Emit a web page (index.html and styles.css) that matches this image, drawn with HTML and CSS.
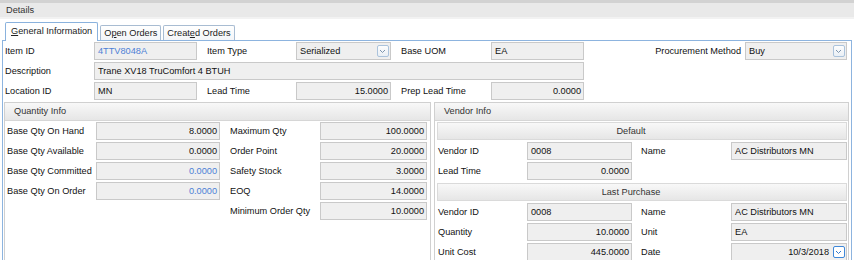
FILE: index.html
```html
<!DOCTYPE html>
<html lang="en">
<head>
    <meta charset="UTF-8">
    <meta name="viewport" content="width=device-width, initial-scale=1.0">
    <title>Item Details</title>
    <link rel="stylesheet" href="styles.css">
</head>
<body>
    <div class="details-bar">Details</div>

    <div class="tabs">
        <div class="tab active"><u>G</u>eneral Information</div>
        <div class="tab">O<u>p</u>en Orders</div>
        <div class="tab">Creat<u>e</u>d Orders</div>
    </div>

    <div class="tab-page">
        <!-- Item header fields -->
        <div class="item-grid">
            <div class="label">Item ID</div>
            <div class="field link">4TTV8048A</div>
            <div class="label gap">Item Type</div>
            <div class="field combo">Serialized<span class="drop"><svg viewBox="0 0 11 12" width="11" height="12"><path d="M3 5l2.5 2.5L8 5" fill="none" stroke="#7d95ae"/></svg></span></div>
            <div class="label gap">Base UOM</div>
            <div class="field">EA</div>
            <div class="label right">Procurement Method</div>
            <div class="field combo">Buy<span class="drop"><svg viewBox="0 0 11 12" width="11" height="12"><path d="M3 5l2.5 2.5L8 5" fill="none" stroke="#7d95ae"/></svg></span></div>

            <div class="label">Description</div>
            <div class="field wide">Trane XV18 TruComfort 4 BTUH</div>

            <div class="label new-row">Location ID</div>
            <div class="field">MN</div>
            <div class="label gap">Lead Time</div>
            <div class="field num">15.0000</div>
            <div class="label gap">Prep Lead Time</div>
            <div class="field num">0.0000</div>
        </div>

        <div class="panels">
            <section class="panel qty">
                <div class="panel-head">Quantity Info</div>
                <div class="qty-grid">
                    <div class="label">Base Qty On Hand</div>
                    <div class="field num">8.0000</div>
                    <div class="label gap">Maximum Qty</div>
                    <div class="field num">100.0000</div>

                    <div class="label">Base Qty Available</div>
                    <div class="field num">0.0000</div>
                    <div class="label gap">Order Point</div>
                    <div class="field num">20.0000</div>

                    <div class="label">Base Qty Committed</div>
                    <div class="field num link">0.0000</div>
                    <div class="label gap">Safety Stock</div>
                    <div class="field num">3.0000</div>

                    <div class="label">Base Qty On Order</div>
                    <div class="field num link">0.0000</div>
                    <div class="label gap">EOQ</div>
                    <div class="field num">14.0000</div>

                    <div class="label gap col-3">Minimum Order Qty</div>
                    <div class="field num">10.0000</div>
                </div>
            </section>

            <section class="panel vendor">
                <div class="panel-head">Vendor Info</div>

                <div class="sub-head">Default</div>
                <div class="vendor-grid">
                    <div class="label">Vendor ID</div>
                    <div class="field">0008</div>
                    <div class="label gap">Name</div>
                    <div class="field">AC Distributors MN</div>

                    <div class="label">Lead Time</div>
                    <div class="field num">0.0000</div>
                </div>

                <div class="sub-head">Last Purchase</div>
                <div class="vendor-grid">
                    <div class="label">Vendor ID</div>
                    <div class="field">0008</div>
                    <div class="label gap">Name</div>
                    <div class="field">AC Distributors MN</div>

                    <div class="label">Quantity</div>
                    <div class="field num">10.0000</div>
                    <div class="label gap">Unit</div>
                    <div class="field">EA</div>

                    <div class="label">Unit Cost</div>
                    <div class="field num">445.0000</div>
                    <div class="label gap">Date</div>
                    <div class="field combo date">10/3/2018<span class="drop focus"><svg viewBox="0 0 11 12" width="11" height="12"><path d="M3 5l2.5 2.5L8 5" fill="none" stroke="#2f78cf"/></svg></span></div>
                </div>
            </section>
        </div>
    </div>
</body>
</html>
```

FILE: styles.css
```css
/* General */
body {
    margin: 0;
    height: 260px;
    overflow: hidden;
    font-family: 'Liberation Sans', Arial, sans-serif;
    font-size: 9.2px;
    color: #111;
    background-color: #fff;
}

/* Details bar */
.details-bar {
    height: 14px;
    line-height: 14px;
    padding-left: 6px;
    border-top: 3px solid #d2d2d2;
    border-bottom: 2px solid #f2f2f2;
    background-color: #e9e9e9;
    color: #333;
}

/* Tabs */
.tabs {
    display: flex;
    align-items: flex-end;
    gap: 2px;
    height: 18px;
    margin-top: 3px;
    padding-left: 5px;
    position: relative;
    z-index: 1;
}

.tab {
    box-sizing: border-box;
    height: 15px;
    line-height: 14px;
    padding: 0 3px;
    border: 1px solid #a8bcd2;
    border-bottom: none;
    border-radius: 2px 2px 0 0;
    background: linear-gradient(#ffffff, #f3f5f8);
    color: #222;
}

.tab.active {
    height: 19px;
    line-height: 17px;
    margin-bottom: -1px;
    padding: 0 5px;
    border-color: #8ab2dd;
    background: #fff;
}

/* Tab page */
.tab-page {
    margin: 0 2px;
    height: 219px;
    border: 1px solid #8db4df;
    border-bottom: none;
}

/* Shared label / field look */
.label {
    line-height: 18px;
    padding-left: 2px;
    white-space: nowrap;
}

.label.gap {
    padding-left: 10px;
}

.label.right {
    text-align: right;
    padding-right: 4px;
}

.field {
    box-sizing: border-box;
    height: 18px;
    line-height: 16px;
    padding: 0 3px;
    border: 1px solid #c9c9c9;
    background-color: #efefef;
    white-space: nowrap;
    overflow: hidden;
}

.field.num {
    text-align: right;
    padding-right: 2px;
}

.field.link {
    color: #4d7fd6;
}

.field.combo {
    display: flex;
    align-items: center;
    padding-right: 1px;
}

.field.date {
    justify-content: flex-end;
}

.drop {
    box-sizing: border-box;
    display: flex;
    width: 12px;
    height: 12px;
    margin-left: auto;
    border: 1px solid #abc3dc;
    border-radius: 2px;
    background: linear-gradient(#fdfdfd, #e9eff5);
}

.date .drop {
    margin-left: 4px;
}

.drop svg {
    display: block;
    margin: -1px 0 0 -1px;
}

.drop.focus {
    border-color: #3f88d9;
    background: #fff;
}

/* Item header grid */
.item-grid {
    display: grid;
    grid-template-columns: 91px 103px 99px 95px 100px 93px 1fr 102px;
    grid-auto-rows: 18px;
    row-gap: 2px;
    padding-top: 1px;
    margin-right: 4px;
}

.field.wide {
    grid-column: 2 / span 5;
}

.label.new-row {
    grid-column-start: 1;
}

/* Lower panels */
.panels {
    display: flex;
    gap: 3px;
    height: 158px;
    margin: 2px 2px 0 1px;
}

.panel {
    border: 1px solid #d0d0d0;
    border-bottom: none;
}

.panel.qty {
    width: 425px;
}

.panel.vendor {
    flex: 1;
}

.panel-head {
    box-sizing: border-box;
    height: 18px;
    line-height: 17px;
    padding-left: 9px;
    border-bottom: 1px solid #d6d6d6;
    background: linear-gradient(#f8f8f8, #e6e6e6);
    color: #333;
}

.sub-head {
    box-sizing: border-box;
    height: 18px;
    line-height: 17px;
    margin: 1px 1px 0 2px;
    padding-right: 22px;
    text-align: center;
    border: 1px solid #dadada;
    background: linear-gradient(#f8f8f8, #e6e6e6);
    color: #333;
}

.qty-grid {
    display: grid;
    grid-template-columns: 91px 124px 100px 107px;
    grid-auto-rows: 18px;
    row-gap: 2px;
    padding-top: 1px;
}

.label.col-3 {
    grid-column-start: 3;
}

.vendor-grid {
    display: grid;
    grid-template-columns: 90px 105px 99px 116px;
    grid-auto-rows: 18px;
    row-gap: 2px;
    padding: 2px 0 2px 2px;
}

.vendor-grid .label {
    padding-left: 1px;
}

.vendor-grid .label.gap {
    padding-left: 9px;
}
```
